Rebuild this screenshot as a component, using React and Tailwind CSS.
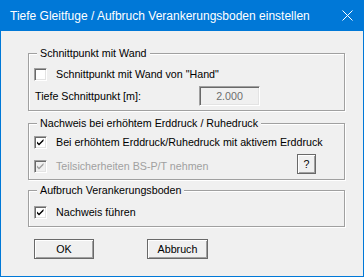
import React from "react";

const font = { fontFamily: '"Liberation Sans", Arial, sans-serif' };

// sunken classic checkbox
function CheckBox({ checked, disabled }) {
  return (
    <div
      className={`w-[13px] h-[13px] shrink-0 border-t border-l border-t-[#a0a0a0] border-l-[#a0a0a0] border-r border-b border-r-white border-b-white shadow-[inset_1px_1px_0_#696969,inset_-1px_-1px_0_#e3e3e3] flex items-center justify-center ${
        disabled ? "bg-[#f0f0f0]" : "bg-white"
      }`}
    >
      {checked && (
        <svg width="11" height="11" viewBox="0 0 11 11">
          <path
            d="M2 4.5 L4 6.5 L8.5 2 L8.5 4 L4 8.5 L2 6.5 Z"
            fill={disabled ? "#a0a0a0" : "#000"}
          />
        </svg>
      )}
    </div>
  );
}

function Group({ title, className, children }) {
  return (
    <fieldset
      className={`ml-[27px] w-[317px] border border-[#a0a0a0] shadow-[inset_1px_1px_0_#fff,1px_1px_0_#fff] ${className}`}
    >
      <legend className="ml-[8px] px-[3px] text-[10.7px] leading-[13px] bg-[#f0f0f0]">
        {title}
      </legend>
      {children}
    </fieldset>
  );
}

function Button({ children, className }) {
  return (
    <button
      className={`h-[20px] border border-[#696969] bg-[#f0f0f0] shadow-[inset_1px_1px_0_#fff,inset_-1px_-1px_0_#a0a0a0] text-[10.7px] text-black flex items-center justify-center ${className}`}
    >
      {children}
    </button>
  );
}

export default function App() {
  return (
    <div className="w-[364px] h-[277px] flex flex-col bg-[#f0f0f0] text-black" style={font}>
      {/* title bar */}
      <div className="h-[31px] shrink-0 bg-[#0078d7] flex items-center pl-[10px] pr-[10px] text-white text-[12px]">
        <span className="flex-1">Tiefe Gleitfuge / Aufbruch Verankerungsboden einstellen</span>
        <svg width="11" height="11" viewBox="0 0 11 11" className="mr-[1px]">
          <path d="M0.5 0.5 L10.5 10.5 M10.5 0.5 L0.5 10.5" stroke="#fff" strokeWidth="1" />
        </svg>
      </div>

      <div className="flex-1 flex flex-col border-x border-b border-[#0078d7]">
        {/* Schnittpunkt mit Wand */}
        <Group title="Schnittpunkt mit Wand" className="mt-[16px] h-[64px]">
          <div className="mt-[8px] h-[13px] flex items-center text-[10.7px]">
            <div className="ml-[5px]">
              <CheckBox />
            </div>
            <span className="ml-[9px]">Schnittpunkt mit Wand von "Hand"</span>
          </div>
          <div className="mt-[5px] h-[20px] flex items-center text-[10.7px]">
            <span className="ml-[6px] w-[164px]">Tiefe Schnittpunkt [m]:</span>
            <div className="w-[61px] h-[20px] border-t border-l border-t-[#a0a0a0] border-l-[#a0a0a0] border-r border-b border-r-white border-b-white shadow-[inset_1px_1px_0_#696969,inset_-1px_-1px_0_#e3e3e3] bg-[#f0f0f0] flex items-center justify-center text-[#6d6d6d]">
              2.000
            </div>
          </div>
        </Group>

        {/* Nachweis bei erhöhtem Erddruck */}
        <Group title="Nachweis bei erhöhtem Erddruck / Ruhedruck" className="mt-[6px] h-[63px]">
          <div className="mt-[6px] h-[13px] flex items-center text-[10.7px]">
            <div className="ml-[5px]">
              <CheckBox checked />
            </div>
            <span className="ml-[9px]">Bei erhöhtem Erddruck/Ruhedruck mit aktivem Erddruck</span>
          </div>
          <div className="mt-[5px] h-[19px] flex items-start text-[10.7px]">
            <div className="ml-[5px] mt-[6px] h-[13px] flex items-center">
              <CheckBox checked disabled />
              <span className="ml-[9px] text-[#a0a0a0]">Teilsicherheiten BS-P/T nehmen</span>
            </div>
            <Button className="ml-auto mr-[28px] w-[19px] h-[19px]">?</Button>
          </div>
        </Group>

        {/* Aufbruch Verankerungsboden */}
        <Group title="Aufbruch Verankerungsboden" className="mt-[4px] h-[43px]">
          <div className="mt-[9px] h-[13px] flex items-center text-[10.7px]">
            <div className="ml-[5px]">
              <CheckBox checked />
            </div>
            <span className="ml-[9px]">Nachweis führen</span>
          </div>
        </Group>

        <div className="mt-[12px] flex">
          <Button className="ml-[33px] w-[60px]">OK</Button>
          <Button className="ml-[53px] w-[61px]">Abbruch</Button>
        </div>
      </div>
    </div>
  );
}
